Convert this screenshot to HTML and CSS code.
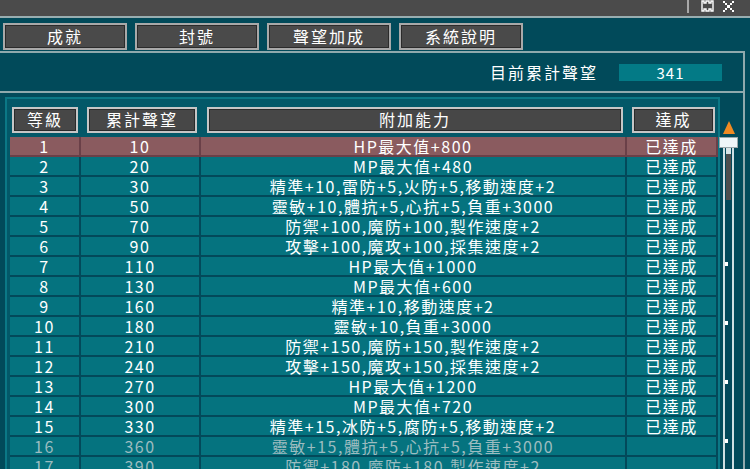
FILE: index.html
```html
<!DOCTYPE html>
<html lang="zh-Hant">
<head>
    <meta charset="UTF-8">
    <title>聲望加成</title>
    <link rel="stylesheet" href="styles.css">
</head>
<body>
    <div class="titlebar">
        <span class="sep"></span>
        <svg class="winicon" width="13" height="13" viewBox="0 0 13 13">
            <path d="M1 1h2v2h2V1h3v2h2V1h2v10h-2V9H8v2H5V9H3v2H1z" fill="none" stroke="#fff" stroke-width="1.4"/>
        </svg>
        <svg class="winicon" width="13" height="13" viewBox="0 0 13 13">
            <g fill="#fff">
                <rect x="1" y="1" width="2" height="2"/><rect x="10" y="1" width="2" height="2"/>
                <rect x="3" y="3" width="2" height="2"/><rect x="8" y="3" width="2" height="2"/>
                <rect x="5" y="5" width="3" height="3"/>
                <rect x="3" y="8" width="2" height="2"/><rect x="8" y="8" width="2" height="2"/>
                <rect x="1" y="10" width="2" height="2"/><rect x="10" y="10" width="2" height="2"/>
            </g>
        </svg>
    </div>

    <div class="tabs">
        <div class="tab">成就</div>
        <div class="tab">封號</div>
        <div class="tab">聲望加成</div>
        <div class="tab">系統說明</div>
    </div>

    <div class="panel">
        <div class="summary">
            <span class="summary-label">目前累計聲望</span>
            <span class="summary-value">341</span>
        </div>

        <div class="content">
            <div class="frame">
                <div class="head">
                    <div class="hcell">等級</div>
                    <div class="hcell">累計聲望</div>
                    <div class="hcell">附加能力</div>
                    <div class="hcell">達成</div>
                </div>

                <div class="row sel"><span>1</span><span>10</span><span>HP最大值+800</span><span>已達成</span></div>
                <div class="row"><span>2</span><span>20</span><span>MP最大值+480</span><span>已達成</span></div>
                <div class="row"><span>3</span><span>30</span><span>精準+10,雷防+5,火防+5,移動速度+2</span><span>已達成</span></div>
                <div class="row"><span>4</span><span>50</span><span>靈敏+10,體抗+5,心抗+5,負重+3000</span><span>已達成</span></div>
                <div class="row"><span>5</span><span>70</span><span>防禦+100,魔防+100,製作速度+2</span><span>已達成</span></div>
                <div class="row"><span>6</span><span>90</span><span>攻擊+100,魔攻+100,採集速度+2</span><span>已達成</span></div>
                <div class="row"><span>7</span><span>110</span><span>HP最大值+1000</span><span>已達成</span></div>
                <div class="row"><span>8</span><span>130</span><span>MP最大值+600</span><span>已達成</span></div>
                <div class="row"><span>9</span><span>160</span><span>精準+10,移動速度+2</span><span>已達成</span></div>
                <div class="row"><span>10</span><span>180</span><span>靈敏+10,負重+3000</span><span>已達成</span></div>
                <div class="row"><span>11</span><span>210</span><span>防禦+150,魔防+150,製作速度+2</span><span>已達成</span></div>
                <div class="row"><span>12</span><span>240</span><span>攻擊+150,魔攻+150,採集速度+2</span><span>已達成</span></div>
                <div class="row"><span>13</span><span>270</span><span>HP最大值+1200</span><span>已達成</span></div>
                <div class="row"><span>14</span><span>300</span><span>MP最大值+720</span><span>已達成</span></div>
                <div class="row"><span>15</span><span>330</span><span>精準+15,冰防+5,腐防+5,移動速度+2</span><span>已達成</span></div>
                <div class="row dim"><span>16</span><span>360</span><span>靈敏+15,體抗+5,心抗+5,負重+3000</span><span></span></div>
                <div class="row dim"><span>17</span><span>390</span><span>防禦+180,魔防+180,製作速度+2</span><span></span></div>
            </div>

            <div class="scroll">
                <div class="arrow"></div>
                <div class="thumb"></div>
                <div class="track">
                    <div class="grip"></div>
                    <div class="ticks"></div>
                </div>
            </div>
        </div>
    </div>
</body>
</html>
```

FILE: styles.css
```css
* {
    box-sizing: border-box;
}
body {
    margin: 0;
    width: 750px;
    height: 469px;
    overflow: hidden;
    background-color: #014a5a;
    color: #fff;
    font-family: "Noto Sans CJK TC", "Noto Sans CJK SC", sans-serif;
    font-size: 16px;
    letter-spacing: 2px;
}
.titlebar {
    height: 18px;
    background-color: #4b4b4b;
    border-bottom: 2px solid #98adb0;
    display: flex;
    justify-content: flex-end;
    align-items: flex-start;
    gap: 8px;
    padding-right: 15px;
}
.sep {
    width: 2px;
    height: 13px;
    background-color: #a8a8a8;
    margin-right: 4px;
}
.winicon {
    display: block;
}
.tabs {
    display: flex;
    gap: 8px;
    padding: 5px 0 0 3px;
}
.tab {
    width: 124px;
    height: 27px;
    line-height: 22px;
    text-align: center;
    background-color: #4a4a4a;
    border: 2px solid #a9a9a9;
    box-shadow: inset 0 0 0 1px #2b2b2b;
}
.panel {
    width: 745px;
    height: 420px;
    margin-top: 1px;
    border-top: 2px solid #8fa9ad;
    border-right: 2px solid #8fa9ad;
}
.summary {
    height: 40px;
    border-bottom: 2px solid #8fa9ad;
    display: flex;
    justify-content: flex-end;
    align-items: center;
    gap: 21px;
    padding-right: 21px;
}
.summary-label {
    line-height: 18px;
}
.summary-value {
    width: 103px;
    height: 17px;
    line-height: 17px;
    text-align: center;
    background-color: #037a86;
    font-size: 15px;
    letter-spacing: 1px;
}
.content {
    display: flex;
    margin: 4px 0 0 5px;
}
.frame {
    width: 715px;
    height: 380px;
    border: 2px solid #0b7886;
    border-bottom: none;
    background-color: #035868;
    padding: 8px 0 0 3px;
}
.head,
.row {
    display: grid;
    grid-template-columns: 71px 120px 426px 91px;
}
.head {
    height: 26px;
    margin-bottom: 4px;
}
.hcell {
    margin: 0 4px 0 6px;
    background-color: #474747;
    border: 2px solid #c6c6c6;
    box-shadow: inset 0 0 0 1px #2a2a2a;
    text-align: center;
    line-height: 21px;
}
.hcell:first-child {
    margin: 0 3px 0 2px;
}
.hcell:last-child {
    margin: 0 3px 0 5px;
}
.row span {
    height: 20px;
    line-height: 18px;
    text-align: center;
    white-space: nowrap;
    letter-spacing: 1.5px;
    background-color: #05737f;
    border-right: 2px solid #03495a;
    border-bottom: 2px solid #03495a;
}
.row.sel span {
    background-color: #8a5b5f;
    border-color: #6a4048;
}
.row.dim span {
    color: #9cbcc0;
}
.scroll {
    width: 19px;
    margin-left: -1px;
    display: flex;
    flex-direction: column;
    align-items: center;
}
.arrow {
    width: 0;
    height: 0;
    margin-top: 24px;
    border-left: 6px solid transparent;
    border-right: 6px solid transparent;
    border-bottom: 13px solid #f08a22;
}
.thumb {
    width: 19px;
    height: 11px;
    margin-top: 3px;
    background-color: #eef6f8;
    border: 1px solid #9aa8ab;
}
.track {
    width: 11px;
    height: 330px;
    background-color: #02485a;
    border-left: 2px solid #cfdfe2;
    border-right: 2px solid #cfdfe2;
}
.grip {
    height: 52px;
    margin: 0 1px;
    background-color: #4e4e4e;
    border-top: 6px solid #d8e4e6;
}
.ticks {
    height: 250px;
    margin-top: 62px;
    background:
        linear-gradient(#fff, #fff) 0 0 / 3px 4px no-repeat,
        linear-gradient(#fff, #fff) 0 59px / 3px 4px no-repeat,
        linear-gradient(#fff, #fff) 0 118px / 3px 4px no-repeat,
        linear-gradient(#fff, #fff) 0 177px / 3px 4px no-repeat;
}
```
